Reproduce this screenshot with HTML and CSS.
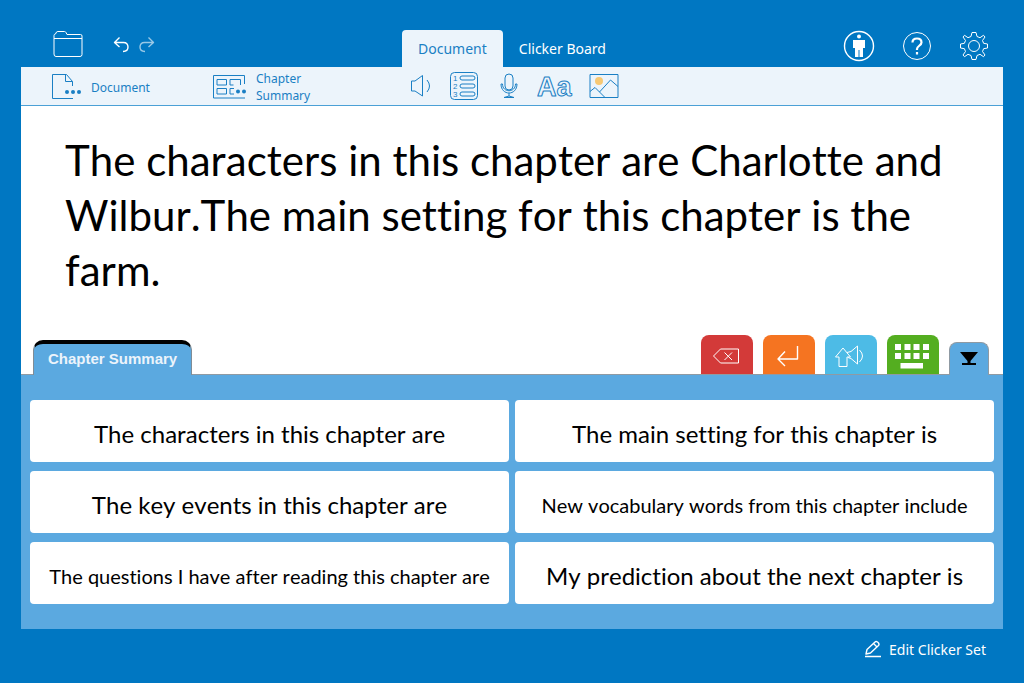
FILE: index.html
```html
<!DOCTYPE html>
<html lang="en">
<head>
    <meta charset="UTF-8">
    <meta name="viewport" content="width=device-width, initial-scale=1.0">
    <title>Clicker - Chapter Summary</title>
    <link rel="stylesheet" href="styles.css">
</head>
<body>
    <header class="topbar">
        <div class="topbar-left">
            <button class="icon-btn" type="button" aria-label="Open files">
                <svg width="30" height="27" viewBox="0 0 30 27"><path d="M1 23V4.500Q1 3 2.500 3L3.500 1Q4 .5 5 .5H11.500Q12.500 .5 13 1.500L14 3.500H27.500Q29 3.500 29 5V23.500Q29 25.500 27 25.500H3Q1 25.500 1 23ZM1 7.500H29"/></svg>
            </button>
            <div class="history">
                <button class="icon-btn" type="button" aria-label="Undo">
                    <svg class="thick" width="17" height="17" viewBox="0 0 17 17"><path d="M6.500 1.500 1.500 6.500 6.500 11M1.500 6.500H10.500Q15 6.500 15 11T10 15.500"/></svg>
                </button>
                <button class="icon-btn dim" type="button" aria-label="Redo">
                    <svg class="thick" width="17" height="17" viewBox="0 0 17 17"><path d="M10.500 1.500 15.500 6.500 10.500 11M15.500 6.500H6.500Q2 6.500 2 11T7 15.500"/></svg>
                </button>
            </div>
        </div>
        <nav class="tabs">
            <button class="tab active" type="button">Document</button>
            <button class="tab" type="button">Clicker Board</button>
        </nav>
        <div class="topbar-right">
            <button class="icon-btn" type="button" aria-label="Accessibility">
                <svg width="32" height="32" viewBox="0 0 32 32"><circle class="thick" cx="16" cy="16" r="14.500"/><circle class="solid" cx="16" cy="6.500" r="2"/><path class="solid" d="M10 10H22V18H20V27H16.500V20H15.500V27H12V18H10Z"/></svg>
            </button>
            <button class="icon-btn" type="button" aria-label="Help">
                <svg width="30" height="30" viewBox="0 0 30 30"><circle cx="15" cy="15" r="13.500"/><path class="heavy" d="M10.500 11.500Q10.500 7.500 15 7.500T19.500 11.500C19.500 14.500 15 15 15 18V19M15 21V23.500"/></svg>
            </button>
            <button class="icon-btn" type="button" aria-label="Settings">
                <svg width="30" height="30" viewBox="0 0 30 30"><circle cx="15" cy="15" r="5.500"/><path d="M13 1.500H17L18 5.500 21 6.700 24.500 4.300 26 6 23.500 9.500 24.600 12.300 28.500 13V17L24.600 17.700 23.500 20.500 26 24 24.500 25.700 21 23.300 18 24.500 17 28.500H13L12 24.500 9 23.300 5.500 25.700 4 24 6.500 20.500 5.400 17.700 1.500 17V13L5.400 12.300 6.500 9.500 4 6 5.500 4.300 9 6.700 12 5.500Z"/></svg>
            </button>
        </div>
    </header>

    <main class="workspace">
        <div class="toolbar">
            <div class="toolbar-files">
                <button class="file-btn" type="button">
                    <svg width="30" height="28" viewBox="0 0 30 28"><path d="M22 25.500H1.500V1.500H15.500L21.500 8.500V13M14.500 1.500V8.500H21.500"/><g class="solid"><circle cx="16" cy="19" r="2"/><circle cx="22" cy="19" r="2"/><circle cx="28" cy="19" r="2"/></g></svg>
                    <span>Document</span>
                </button>
                <button class="file-btn" type="button">
                    <svg width="34" height="26" viewBox="0 0 34 26"><path d="M32.500 10V1.500H1.500V24H33M5 5.500H14.500V11H5ZM5 14.500H14.500V20H5ZM18 11V5.500H28.500V11M18 11H21.500M22 14.500H18V20H22"/><g class="solid"><circle cx="26" cy="17.500" r="2"/><circle cx="32" cy="17.500" r="2"/></g></svg>
                    <span>Chapter<br>Summary</span>
                </button>
            </div>
            <div class="toolbar-tools">
                <button class="icon-btn" type="button" aria-label="Speak">
                    <svg width="24" height="24" viewBox="0 0 24 24"><path d="M2.500 7H6L13.500 1.500V22L6 17H2.500ZM18 6Q23 12 18 18"/></svg>
                </button>
                <button class="icon-btn" type="button" aria-label="Word list">
                    <svg width="30" height="30" viewBox="0 0 30 30"><rect x="1.500" y="1.500" width="27" height="27" rx="4"/><rect x="11" y="5" width="15" height="4" rx="2"/><rect x="11" y="13" width="15" height="4" rx="2"/><rect x="11" y="21" width="15" height="4" rx="2"/><g class="digits"><text x="4" y="10">1</text><text x="4" y="18">2</text><text x="4" y="26">3</text></g></svg>
                </button>
                <button class="icon-btn" type="button" aria-label="Dictate">
                    <svg width="26" height="28" viewBox="-4 0 26 28"><rect x="6" y="2" width="8" height="16" rx="4"/><path d="M2 12C2 24 18 24 18 12H16.500C16.500 21 3.500 21 3.500 12ZM10 21V24M5 25.500Q10 22.500 15 25.500Z"/></svg>
                </button>
                <button class="icon-btn" type="button" aria-label="Font">
                    <svg width="36" height="32" viewBox="0 0 36 32"><text class="outline-text" x="0" y="26">Aa</text></svg>
                </button>
                <button class="icon-btn" type="button" aria-label="Pictures">
                    <svg width="30" height="28" viewBox="0 0 30 28"><circle class="sun" cx="10" cy="9" r="4"/><rect x="1" y="2.500" width="28" height="23"/><path d="M1 19.500 6 15.500 16 25.500M10.500 20 21.500 8 29 14.500"/></svg>
                </button>
            </div>
        </div>

        <section class="document">
            <textarea class="page-text" aria-label="Document text" spellcheck="false">The characters in this chapter are Charlotte and Wilbur.The main setting for this chapter is the farm.</textarea>
            <div class="grid-tabs">
                <button class="grid-tab" type="button">Chapter Summary</button>
                <div class="keys">
                    <button class="key delete" type="button" aria-label="Delete">
                        <svg width="28" height="18" viewBox="0 0 28 18"><path d="M1.500 9 8.500 2H26.500V16H8.500ZM12.500 5.500 20 13M20 5.500 12.500 13"/></svg>
                    </button>
                    <button class="key enter" type="button" aria-label="Return">
                        <svg class="thick" width="24" height="24" viewBox="0 0 24 24"><path d="M21.500 2V15H2M9 7.500 2 15 9 22"/></svg>
                    </button>
                    <button class="key speak" type="button" aria-label="Say it">
                        <svg width="32" height="24" viewBox="0 0 32 24"><path d="M9 4 16.500 13H13V22.500H5V13H1.500ZM13 8.500 17 7.500 23.500 2V20L17 14.500 14 13.500M25.500 6Q31.500 12 25.500 18"/></svg>
                    </button>
                    <button class="key keyboard" type="button" aria-label="Keyboard">
                        <svg width="36" height="26" viewBox="0 0 36 26"><path class="solid" d="M1 1H7V7H1ZM10.500 1H16.500V7H10.500ZM19.500 1H25.500V7H19.500ZM29 1H35V7H29ZM1 10H7V16H1ZM10.500 10H16.500V16H10.500ZM19.500 10H25.500V16H19.500ZM29 10H35V16H29ZM6.500 20H29V25.500H6.500Z"/></svg>
                    </button>
                    <button class="grid-toggle" type="button" aria-label="Hide grid">
                        <svg width="18" height="14" viewBox="0 0 18 14"><path class="solid" d="M0 0H18L10.500 9V11H16V13H2V11H7.500V9Z"/></svg>
                    </button>
                </div>
            </div>
        </section>

        <section class="word-grid">
            <button class="cell" type="button">The characters in this chapter are</button>
            <button class="cell" type="button">The main setting for this chapter is</button>
            <button class="cell" type="button">The key events in this chapter are</button>
            <button class="cell small" type="button">New vocabulary words from this chapter include</button>
            <button class="cell small" type="button">The questions I have after reading this chapter are</button>
            <button class="cell" type="button">My prediction about the next chapter is</button>
        </section>
    </main>

    <footer class="bottombar">
        <button class="edit-btn" type="button">
            <svg width="18" height="18" viewBox="0 0 18 18"><path class="thick" d="M2 14 3 9.500 11 2Q12 .8 13.500 2L14.500 3Q15.500 4.500 14.500 5.500L6.500 13ZM9.500 3.500 13 7M1 16.500H17"/></svg>
            <span>Edit Clicker Set</span>
        </button>
    </footer>
</body>
</html>
```
FILE: styles.css
```css
* {
    box-sizing: border-box;
}

body {
    margin: 0;
    padding: 0 21px;
    min-height: 100vh;
    display: flex;
    flex-direction: column;
    background-color: #0077c2;
    color: #fff;
    font-family: "Noto Sans", "Open Sans", sans-serif;
    font-size: 14px;
}

button {
    margin: 0;
    padding: 0;
    border: none;
    background: none;
    color: inherit;
    font: inherit;
    cursor: pointer;
}

svg {
    display: block;
    flex: none;
    fill: none;
    stroke: currentColor;
    stroke-width: 1;
    stroke-linejoin: round;
}

.thick {
    stroke-width: 1.4;
}

.heavy {
    stroke-width: 2.2;
}

.solid {
    fill: currentColor;
    stroke: none;
}

/* top bar */
.topbar {
    display: grid;
    grid-template-columns: 1fr auto 1fr;
    align-items: end;
    height: 67px;
}

.topbar-left {
    display: flex;
    align-items: center;
    gap: 30px;
    height: 46px;
    padding-left: 32px;
}

.history {
    display: flex;
    gap: 8px;
}

.dim {
    opacity: 0.6;
}

.tabs {
    display: flex;
}

.tab {
    height: 37px;
    padding: 0 16px;
    border-radius: 4px 4px 0 0;
}

.tab.active {
    background-color: #ecf4fb;
    color: #1a7fc4;
}

.topbar-right {
    display: flex;
    align-items: center;
    justify-content: flex-end;
    gap: 27px;
    height: 42px;
    padding-right: 14px;
}

/* toolbar */
.workspace {
    flex: 1;
    display: flex;
    flex-direction: column;
}

.toolbar {
    display: grid;
    grid-template-columns: 1fr auto 1fr;
    height: 39px;
    background-color: #ecf4fb;
    border-bottom: 1px solid #4ba0d6;
    color: #1a7fc4;
}

.toolbar-files {
    display: flex;
    gap: 62px;
    padding-left: 30px;
}

.file-btn {
    display: flex;
    align-items: center;
    gap: 10px;
    padding-top: 2px;
    font-size: 12px;
    line-height: 17px;
    text-align: left;
}

.toolbar-tools {
    display: flex;
    align-items: center;
    gap: 16px;
    padding-left: 4px;
}

.digits {
    fill: currentColor;
    stroke: none;
    font-family: "Liberation Sans", Arial, sans-serif;
    font-size: 8px;
}

.outline-text {
    font-family: "Liberation Sans", Arial, sans-serif;
    font-size: 27px;
    font-weight: bold;
}

.sun {
    fill: #f7c873;
    stroke: none;
}

/* document */
.document {
    flex: 1;
    display: flex;
    flex-direction: column;
    background-color: #fff;
}

.page-text {
    flex: 1;
    padding: 27px 44px 0;
    border: none;
    outline: none;
    resize: none;
    overflow: hidden;
    background: none;
    color: #000;
    font-family: Lato, "Noto Sans", sans-serif;
    font-size: 42px;
    font-kerning: none;
    font-variant-ligatures: none;
    line-height: 55px;
}

.grid-tabs {
    display: flex;
    align-items: flex-end;
    justify-content: space-between;
    padding: 0 14px 0 12px;
    border-bottom: 1px solid #8f9aa3;
}

.grid-tab {
    height: 35px;
    margin-bottom: -1px;
    padding: 0 14px 3px;
    border: 1px solid #7f8c96;
    border-top: 4px solid #000;
    border-bottom: none;
    border-radius: 10px 10px 0 0;
    background-color: #5ba9e0;
    color: #ecf4fb;
    font-family: "Liberation Sans", Arial, sans-serif;
    font-size: 15px;
    font-weight: bold;
}

.keys {
    display: flex;
    align-items: flex-end;
    gap: 10px;
}

.key,
.grid-toggle {
    display: flex;
    align-items: center;
    justify-content: center;
    border-radius: 8px 8px 0 0;
}

.key {
    width: 52px;
    height: 39px;
    padding: 2px 2px 0 0;
}

.delete {
    background-color: #d33a39;
}

.enter {
    background-color: #f57421;
}

.speak {
    background-color: #4dbbe6;
}

.keyboard {
    background-color: #54ae20;
}

.grid-toggle {
    width: 40px;
    height: 33px;
    margin-bottom: -1px;
    border: 1px solid #8f9aa3;
    border-bottom: none;
    background-color: #5ba9e0;
    color: #000;
}

/* word grid */
.word-grid {
    display: grid;
    grid-template-columns: 1fr 1fr;
    gap: 9px 6px;
    padding: 25px 9px;
    background-color: #5ba9e0;
}

.cell {
    height: 62px;
    padding-top: 5px;
    border-radius: 4px;
    background-color: #fff;
    color: #000;
    font-family: Lato, "Noto Sans", sans-serif;
    font-size: 24px;
    font-kerning: none;
    font-variant-ligatures: none;
}

.cell.small {
    font-size: 20px;
}

/* bottom bar */
.bottombar {
    display: flex;
    justify-content: flex-end;
    height: 54px;
    padding: 8px 17px 22px;
}

.edit-btn {
    display: flex;
    align-items: center;
    gap: 7px;
}
```
